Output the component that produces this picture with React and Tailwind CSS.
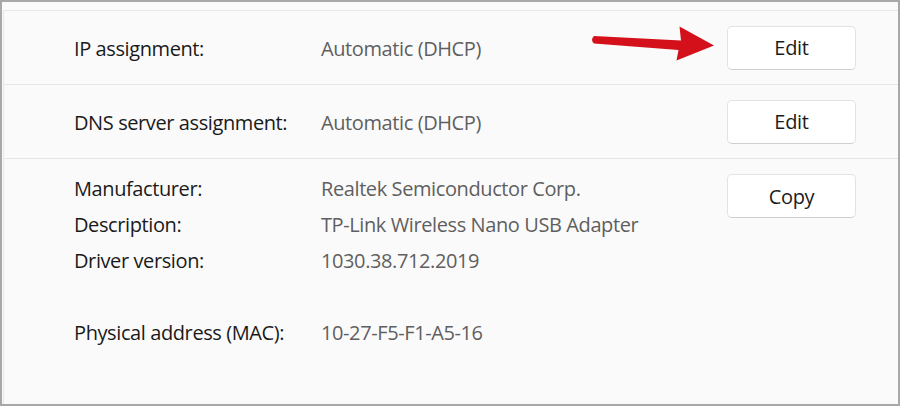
import React from "react";

const font = { fontFamily: '"Open Sans", "Noto Sans", sans-serif' };

function Btn({ children }) {
  return (
    <button className="w-[129px] h-[44px] rounded-[5px] bg-white border border-[#e3e3e3] border-b-[#cfcfcf] text-[20px] tracking-[-0.3px] text-[#1b1b1b] flex items-center justify-center shrink-0 pt-[1px]">
      {children}
    </button>
  );
}

function Row({ label, value, btn }) {
  return (
    <div className="h-[74px] border-b border-[#e6e6e6] flex items-center pl-[70px] pr-[42px]">
      <div className="w-[247px] text-[20px] tracking-[-0.4px] text-[#1a1a1a] pt-[3px]">{label}</div>
      <div className="flex-1 text-[20px] tracking-[-0.4px] text-[#5f5f5f] pt-[3px]">{value}</div>
      <Btn>{btn}</Btn>
    </div>
  );
}

export default function App() {
  const details = [
    ["Manufacturer:", "Realtek Semiconductor Corp."],
    ["Description:", "TP-Link Wireless Nano USB Adapter"],
    ["Driver version:", "1030.38.712.2019"],
    ["", ""],
    ["Physical address (MAC):", "10-27-F5-F1-A5-16"],
  ];
  return (
    <div className="relative w-[900px] h-[406px] bg-[#fbfafb] border-2 border-[#a8a8a8] overflow-hidden" style={font}>
      <div className="h-[8px]" />
      <div className="border-t border-l border-[#e8e8e8] ml-[1px] h-[394px]">
        <Row label="IP assignment:" value="Automatic (DHCP)" btn="Edit" />
        <Row label="DNS server assignment:" value="Automatic (DHCP)" btn="Edit" />
        <div className="flex pl-[70px] pr-[42px] pt-[12px]">
          <div className="w-[247px] text-[20px] tracking-[-0.4px] text-[#1a1a1a] leading-[36px]">
            {details.map(([l], i) => (
              <div key={i} className="h-[36px]">{l}</div>
            ))}
          </div>
          <div className="flex-1 text-[20px] tracking-[-0.4px] text-[#5f5f5f] leading-[36px]">
            {details.map(([, v], i) => (
              <div key={i} className="h-[36px]">{v}</div>
            ))}
          </div>
          <div className="pt-[3px]">
            <Btn>Copy</Btn>
          </div>
        </div>
      </div>
      <svg className="absolute left-[-2px] top-[-2px] pointer-events-none" width="900" height="406" viewBox="0 0 900 406">
        <path
          d="M594 36 L681 40.5 L679.5 26.5 L714 45.5 L676.5 60.5 L678.5 50 L594 43.5 Q590 39.75 594 36 Z"
          fill="#d4101a"
        />
      </svg>
    </div>
  );
}
